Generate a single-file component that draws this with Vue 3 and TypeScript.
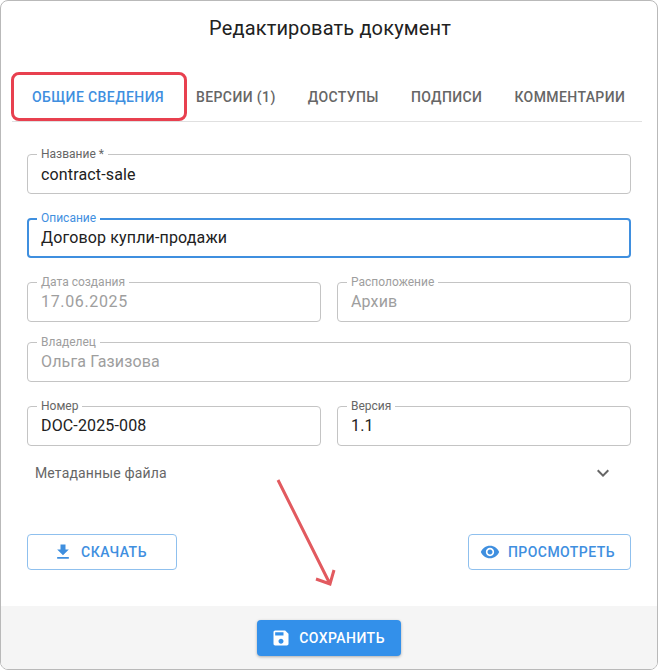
<template>
  <div class="dialog">
    <h2 class="title">Редактировать документ</h2>

    <div class="tabs">
      <div
        v-for="(tab, i) in tabs"
        :key="tab"
        class="tab"
        :class="{ active: i === 0 }"
      >
        {{ tab }}
      </div>
      <div class="tab-highlight"></div>
    </div>

    <div class="form">
      <div class="row">
        <div class="field">
          <span class="label">Название *</span>
          <span class="value lowered">contract-sale</span>
        </div>
      </div>
      <div class="row">
        <div class="field focused">
          <span class="label">Описание</span>
          <span class="value">Договор купли-продажи</span>
        </div>
      </div>
      <div class="row short">
        <div class="field disabled">
          <span class="label">Дата создания</span>
          <span class="value date">17.06.2025</span>
        </div>
        <div class="field disabled">
          <span class="label">Расположение</span>
          <span class="value">Архив</span>
        </div>
      </div>
      <div class="row">
        <div class="field disabled">
          <span class="label">Владелец</span>
          <span class="value">Ольга Газизова</span>
        </div>
      </div>
      <div class="row">
        <div class="field">
          <span class="label">Номер</span>
          <span class="value">DOC-2025-008</span>
        </div>
        <div class="field">
          <span class="label">Версия</span>
          <span class="value">1.1</span>
        </div>
      </div>

      <div class="meta">
        <span>Метаданные файла</span>
        <svg class="chevron" viewBox="0 0 24 24" width="24" height="24">
          <path d="M16.59 8.59 12 13.17 7.41 8.59 6 10l6 6 6-6z" />
        </svg>
      </div>

      <div class="actions">
        <button class="btn outlined download">
          <svg viewBox="0 0 24 24" width="20" height="20">
            <path d="M19 9h-4V3H9v6H5l7 7 7-7zM5 18v2h14v-2H5z" />
          </svg>
          Скачать
        </button>
        <button class="btn outlined preview">
          <svg viewBox="0 0 24 24" width="20" height="20">
            <path d="M12 4.5C7 4.5 2.73 7.61 1 12c1.73 4.39 6 7.5 11 7.5s9.27-3.11 11-7.5c-1.73-4.39-6-7.5-11-7.5zM12 17c-2.76 0-5-2.24-5-5s2.24-5 5-5 5 2.24 5 5-2.24 5-5 5zm0-8c-1.66 0-3 1.34-3 3s1.34 3 3 3 3-1.34 3-3-1.34-3-3-3z" />
          </svg>
          Просмотреть
        </button>
      </div>
    </div>

    <div class="footer">
      <button class="btn contained">
        <svg viewBox="0 0 24 24" width="20" height="20">
          <path d="M17 3H5c-1.11 0-2 .9-2 2v14c0 1.1.89 2 2 2h14c1.1 0 2-.9 2-2V7l-4-4zm-5 16c-1.66 0-3-1.34-3-3s1.34-3 3-3 3 1.34 3 3-1.34 3-3 3zm3-10H5V5h10v4z" />
        </svg>
        Сохранить
      </button>
    </div>

    <svg class="arrow" viewBox="0 0 70 115" width="70" height="115">
      <path d="M6 2 L58 106 M44 101 L58 106 L62 92" />
    </svg>
  </div>
</template>

<script setup lang="ts">
const tabs: string[] = ['Общие сведения', 'Версии (1)', 'Доступы', 'Подписи', 'Комментарии']
</script>

<style>
html,
body {
  margin: 0;
  background: #fff;
}
</style>

<style scoped>
.dialog {
  position: relative;
  box-sizing: border-box;
  width: 658px;
  height: 670px;
  display: flex;
  flex-direction: column;
  border: 1px solid #b9b9b9;
  border-radius: 8px;
  overflow: hidden;
  background: #fff;
  font-family: Roboto, "Noto Sans", sans-serif;
  color: #212121;
}

.title {
  margin: 0;
  height: 72px;
  padding: 15px 0 0 2px;
  box-sizing: border-box;
  text-align: center;
  font-size: 20px;
  line-height: 24px;
  font-weight: 400;
  letter-spacing: 0.15px;
}

.tabs {
  position: relative;
  display: flex;
  margin: 0 15px 0 11px;
  padding-left: 4px;
  height: 49px;
  box-sizing: border-box;
  border-bottom: 1px solid #e0e0e0;
}

.tab {
  padding: 0 16px;
  line-height: 48px;
  font-size: 14px;
  font-weight: 500;
  letter-spacing: 0.4px;
  text-transform: uppercase;
  color: #666;
  white-space: nowrap;
}

.tab.active {
  color: #3f8fdf;
}

.tab-highlight {
  position: absolute;
  left: -1px;
  top: -1px;
  width: 176px;
  height: 49px;
  box-sizing: border-box;
  border: 3px solid #e8404f;
  border-radius: 8px;
}

.form {
  flex: 1;
  padding: 32px 26px 0;
  display: flex;
  flex-direction: column;
}

.row {
  display: flex;
  gap: 16px;
  margin-bottom: 24px;
}

.row.short {
  margin-bottom: 20px;
}

.field {
  position: relative;
  flex: 1;
  height: 40px;
  box-sizing: border-box;
  display: flex;
  align-items: center;
  padding: 0 13px;
  border: 1px solid #c4c4c4;
  border-radius: 4px;
}

.label {
  position: absolute;
  left: 9px;
  top: -7px;
  padding: 0 4px;
  background: #fff;
  font-size: 12px;
  line-height: 12px;
  color: #666;
}

.value {
  font-size: 16px;
  line-height: 24px;
  letter-spacing: 0.15px;
  color: #212121;
}

.value.lowered {
  padding-top: 2px;
}

.value.date {
  letter-spacing: 0.65px;
}

.field.focused {
  border: 2px solid #3f8fdf;
  padding: 0 12px;
}

.field.focused .label {
  left: 8px;
  top: -8px;
  color: #3f8fdf;
}

.field.disabled .label,
.field.disabled .value {
  color: #9e9e9e;
}

.meta {
  height: 24px;
  margin-top: -9px;
  padding: 0 16px 0 8px;
  display: flex;
  align-items: center;
  justify-content: space-between;
  font-size: 14px;
  color: #666;
  letter-spacing: 0.15px;
}

.chevron {
  fill: #666;
}

.actions {
  display: flex;
  justify-content: space-between;
  margin-top: 49px;
}

.btn {
  display: inline-flex;
  align-items: center;
  justify-content: center;
  gap: 8px;
  height: 36px;
  box-sizing: border-box;
  padding: 0 4px 0 0;
  border-radius: 4px;
  font-family: inherit;
  font-size: 14px;
  font-weight: 500;
  letter-spacing: 0.45px;
  text-transform: uppercase;
  cursor: pointer;
}

.btn svg {
  fill: currentColor;
}

.outlined {
  background: #fff;
  color: #3f8fdf;
  border: 1px solid #8fc0ee;
}

.download {
  width: 150px;
}

.preview {
  width: 163px;
}

.footer {
  height: 63px;
  box-sizing: border-box;
  padding-top: 14px;
  display: flex;
  justify-content: center;
  background: #f5f5f5;
}

.contained {
  width: 144px;
  padding: 0 2px 0 0;
  border: none;
  background: #3390ea;
  color: #fff;
  box-shadow: 0 1px 3px rgba(0, 0, 0, 0.3);
}

.arrow {
  position: absolute;
  left: 271px;
  top: 477px;
  fill: none;
  stroke: #e25a5f;
  stroke-width: 3;
}
</style>
